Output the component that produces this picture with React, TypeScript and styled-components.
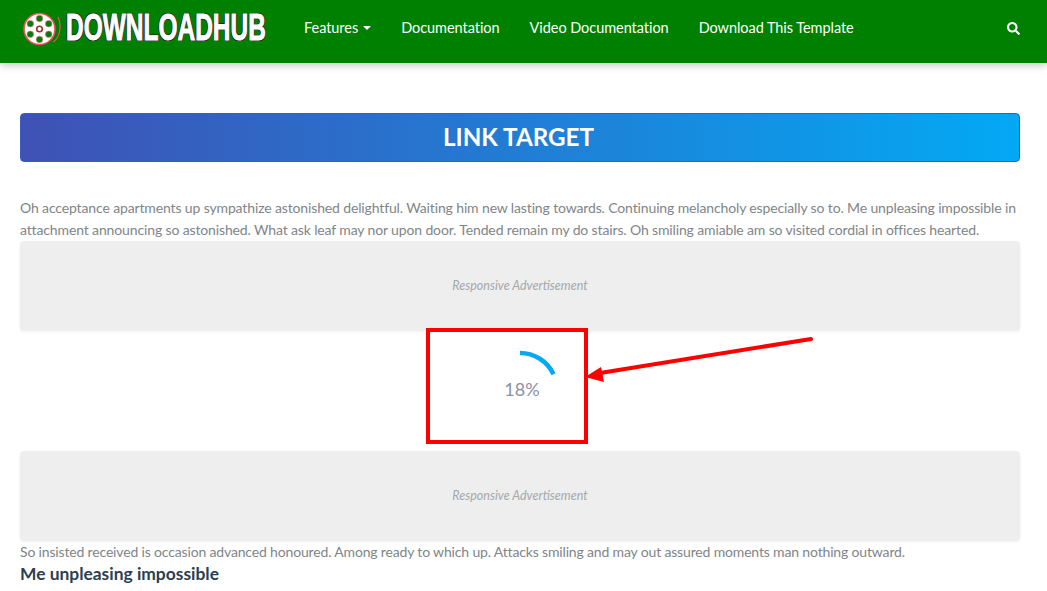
import styled, { createGlobalStyle } from "styled-components"
import { FaSearch } from "react-icons/fa"

const GlobalStyle = createGlobalStyle`
  html, body {
    margin: 0;
    padding: 0;
    background: #fff;
    overflow: hidden;
    height: 591px;
  }
  body {
    font-family: Lato, "Open Sans", sans-serif;
  }
`

const navLinks = ["Documentation", "Video Documentation", "Download This Template"]
const holes = [
  [16.5, 6.5],
  [16.5, 27.5],
  [7.3, 11.7],
  [25.7, 11.7],
  [7.3, 22.3],
  [25.7, 22.3],
]

const Reel = () => (
  <ReelSvg viewBox="0 0 40 34" width="40" height="34">
    <circle cx="16.5" cy="17" r="15.5" fill="#fff" stroke="#e8505b" strokeWidth="1.6" />
    <path d="M30 30 C37 26 39 14 35 5" fill="none" stroke="#e8505b" strokeWidth="1.2" />
    <circle cx="16.5" cy="17" r="2.8" fill="#fff" stroke="#a03030" strokeWidth="1.6" />
    {holes.map(([x, y]) => (
      <circle key={`${x}-${y}`} cx={x} cy={y} r="3.3" fill="#0a7a0a" stroke="#e8808a" strokeWidth="0.6" />
    ))}
  </ReelSvg>
)

export default function App() {
  return (
    <>
      <GlobalStyle />
      <Header>
        <Logo>
          <Reel />
          <LogoText>DOWNLOADHUB</LogoText>
        </Logo>
        <Nav>
          <NavLink>
            Features
            <Caret />
          </NavLink>
          {navLinks.map(l => (
            <NavLink key={l}>{l}</NavLink>
          ))}
        </Nav>
        <SearchIcon />
      </Header>
      <Main>
        <Banner>LINK TARGET</Banner>
        <Para>
          Oh acceptance apartments up sympathize astonished delightful. Waiting him new lasting towards. Continuing melancholy especially so to. Me unpleasing impossible in attachment announcing so astonished. What ask leaf may nor upon door. Tended remain my do stairs. Oh smiling amiable am so visited cordial in offices hearted.
        </Para>
        <AdBox>Responsive Advertisement</AdBox>
        <Counter>
          <Spinner viewBox="0 0 100 100" width="100" height="100">
            <path d="M50 13 A37 37 0 0 1 83.5 34.2" fill="none" stroke="#03a9f4" strokeWidth="4.5" />
          </Spinner>
          <Percent>18%</Percent>
          <RedBox />
          <Arrow viewBox="0 0 240 60" width="240" height="60">
            <path d="M227 6 L16 40" stroke="#f00" strokeWidth="4" strokeLinecap="round" fill="none" />
            <path d="M1 44 L17 34 L20 49 Z" fill="#f00" />
          </Arrow>
        </Counter>
        <AdBox>Responsive Advertisement</AdBox>
        <ClosingPara>
          So insisted received is occasion advanced honoured. Among ready to which up. Attacks smiling and may out assured moments man nothing outward.
        </ClosingPara>
        <SubHeading>Me unpleasing impossible</SubHeading>
      </Main>
    </>
  )
}

const Header = styled.header`
  height: 63px;
  background: #008000;
  display: flex;
  align-items: center;
  padding: 0 27px 7px 23px;
  box-sizing: border-box;
  box-shadow: 0 2px 8px rgba(0, 0, 0, 0.25);
`

const Logo = styled.div`
  display: flex;
  align-items: center;
  width: 281px;
  flex-shrink: 0;
`

const ReelSvg = styled.svg`
  flex-shrink: 0;
  margin-top: 1px;
`

const LogoText = styled.span`
  display: inline-block;
  margin-left: 3px;
  font-family: "Liberation Sans", sans-serif;
  font-weight: 700;
  font-size: 36px;
  line-height: 34px;
  color: #fff;
  -webkit-text-stroke: 1px #fff;
  text-shadow: 1px 0 #222, -1px 0 #222, 0 1px #222, 0 -1px #222, 1px 1px #222, -1px 1px #222, 1px -1px #222, -1px -1px #222;
  transform: scaleX(0.68);
  transform-origin: left center;
  white-space: nowrap;
`

const Nav = styled.nav`
  display: flex;
  gap: 30px;
  flex: 1;
  margin-top: -1px;
`

const NavLink = styled.a`
  display: flex;
  align-items: center;
  color: #fff;
  font-size: 14.5px;
  letter-spacing: -0.05px;
  line-height: 20px;
  white-space: nowrap;
`

const Caret = styled.span`
  margin-left: 5px;
  border-top: 4px solid #fff;
  border-left: 4px solid transparent;
  border-right: 4px solid transparent;
`

const SearchIcon = styled(FaSearch)`
  color: #fff;
  font-size: 13px;
`

const Main = styled.main`
  padding: 50px 27px 0 20px;
`

const Banner = styled.div`
  height: 49px;
  box-sizing: border-box;
  padding-right: 3px;
  border: 1px solid #3b5cc0;
  border-radius: 4px;
  background: linear-gradient(to right, #3f51b5, #03a9f4);
  color: #fff;
  font-size: 24.2px;
  font-weight: 700;
  line-height: 46px;
  text-align: center;
`

const Para = styled.p`
  margin: 35px 0 0;
  font-size: 14px;
  line-height: 22px;
  letter-spacing: -0.135px;
  color: #808589;
`

const AdBox = styled.div`
  height: 90px;
  box-sizing: border-box;
  padding-bottom: 2px;
  border-radius: 4px;
  background: #eee;
  box-shadow: 0 1px 3px rgba(0, 0, 0, 0.06);
  display: flex;
  align-items: center;
  justify-content: center;
  color: #a5a8aa;
  font-size: 12.5px;
  font-style: italic;
`

const Counter = styled.div`
  position: relative;
  height: 120px;
`

const Spinner = styled.svg`
  position: absolute;
  left: 450px;
  top: 9px;
`

const Percent = styled.div`
  position: absolute;
  left: 4px;
  right: 0;
  top: 46px;
  text-align: center;
  font-family: Lato, sans-serif;
  font-size: 18px;
  line-height: 24px;
  color: #8b93a1;
`

const RedBox = styled.div`
  position: absolute;
  left: 406px;
  top: -3px;
  width: 162px;
  height: 116px;
  box-sizing: border-box;
  border: 4px solid #f00;
`

const Arrow = styled.svg`
  position: absolute;
  left: 564px;
  top: 2px;
`

const ClosingPara = styled.p`
  margin: 0;
  font-size: 14px;
  line-height: 21px;
  letter-spacing: -0.16px;
  color: #808589;
`

const SubHeading = styled.h4`
  margin: 1px 0 0;
  font-size: 17.4px;
  line-height: 22px;
  font-weight: 700;
  color: #2c3e50;
`
